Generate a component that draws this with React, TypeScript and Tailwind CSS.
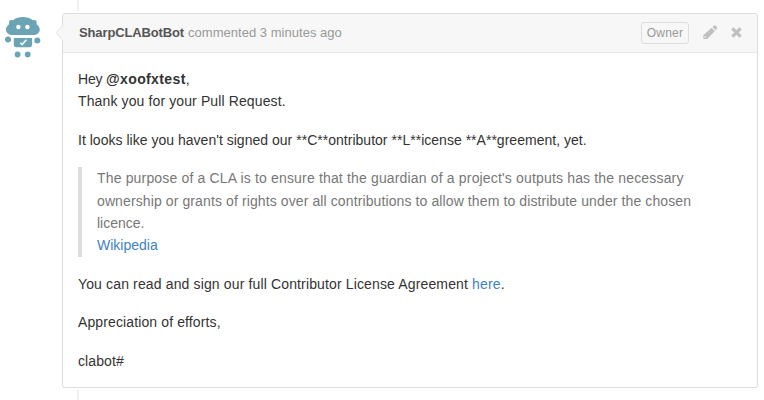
import type { ReactNode } from 'react';

function RobotAvatar() {
  return (
    <svg className="block h-[44px] w-[38px]" viewBox="0 0 38 44" fill="#6ba5b5" role="img" aria-label="SharpCLABotBot">
      <path d="M4.3 4.8Q5.4 3.7 8 4.3C10.5 2.3 14 1.1 17.8 1.1C21.6 1.1 25.3 2.3 27.8 4.3Q30.4 3.7 31.4 4.8Q31.9 6.4 31.6 8.2C33.7 9.7 34.8 11.6 34.8 13.7C34.8 16.2 32.8 18.1 29.8 19.1H6C3 18.1.9 16.2.9 13.7C.9 11.6 2 9.7 4.1 8.2Q3.8 6.4 4.3 4.8Z" />
      <path d="M8.8 21.9H27.1V28.6Q27.1 31.2 24.6 31.2H11.4Q8.8 31.2 8.8 28.6Z" />
      <circle cx="3" cy="23.6" r="3" />
      <circle cx="32.3" cy="24.6" r="3" />
      <circle cx="12.6" cy="38.5" r="2.9" />
      <circle cx="22.7" cy="38.5" r="2.9" />
      <circle cx="13.4" cy="11" r="2.2" fill="#fff" />
      <circle cx="22.4" cy="11" r="2.2" fill="#fff" />
      <path d="M15.3 26.7L17.2 28.6L21.3 23.7" fill="none" stroke="#fff" strokeWidth="1.5" />
    </svg>
  );
}

function PencilIcon() {
  return (
    <svg className="block h-[14px] w-[15px]" viewBox="0 0 15 14" fill="#c0c0c0" aria-label="Edit">
      <path d="M.3 14V10.2L8.6 2.7L11.9 6L4.2 14ZM1.5 11.4V12.8H2.9L3.3 12.3L2 11Z" fillRule="evenodd" />
      <path d="M9.4 2L11.1.6Q11.8 0 12.5.6L14 2.1Q14.6 2.8 14 3.5L12.7 5.2Z" />
    </svg>
  );
}

function CloseIcon() {
  return (
    <svg className="block h-[11px] w-[11px]" viewBox="0 0 11 11" aria-label="Delete">
      <path d="M1.4 1.4L9.6 9.6M9.6 1.4L1.4 9.6" stroke="#c0c0c0" strokeWidth="3.3" />
    </svg>
  );
}

function Paragraph({ children }: { children: ReactNode }) {
  return <p className="whitespace-nowrap">{children}</p>;
}

export default function App() {
  return (
    <div className="flex h-[400px] w-[764px] overflow-hidden bg-white font-['Liberation_Sans',Arial,sans-serif]">
      <div className="w-[62px] shrink-0 pt-4 pl-[5px]">
        <RobotAvatar />
      </div>
      <main className="flex w-[696px] flex-col">
        <div className="ml-[15px] h-[11px] w-0.5 shrink-0 bg-[#f0f0f0]" />
        <article className="relative mt-0.5 h-[375px] shrink-0 rounded-[3px] border border-[#dddddd] bg-white">
          <svg className="absolute top-[11px] -left-[8px] h-4 w-2" viewBox="0 0 8 16">
            <path d="M8 0L.7 7.7L8 15.4Z" fill="#f7f7f7" />
            <path d="M7.6 .8L.9 7.7L7.6 14.6" fill="none" stroke="#e5e5e5" />
          </svg>
          <header className="flex h-[39px] items-center rounded-t-[2px] border-b border-[#e8e8e8] bg-[#f7f7f7] pr-[15px] pl-4 text-[13px] text-[#999999]">
            <div className="flex-1 pb-px whitespace-nowrap">
              <strong className="inline-block w-[105px] font-bold tracking-[-0.13px] text-[#555555]">SharpCLABotBot</strong>
              <span className="ml-1 tracking-[0.03px]">commented 3 minutes ago</span>
            </div>
            <span className="mr-[14px] flex h-[22px] w-12 items-center justify-center rounded-[3px] border border-[#dddddd] text-[12px] tracking-[0.2px]">Owner</span>
            <span className="pb-[2px]"><PencilIcon /></span>
            <span className="ml-[13px] pb-px"><CloseIcon /></span>
          </header>
          <div className="flex flex-col gap-4 px-[15px] pt-[15px] text-[14px] leading-[22.4px] text-[#333333]">
            <Paragraph>
              <span className="tracking-[-0.2px]">Hey </span>
              <strong className="tracking-[0.38px]">@xoofxtest</strong>,<br />
              <span className="tracking-[0.12px]">Thank you for your Pull Request.</span>
            </Paragraph>
            <Paragraph>
              <span className="tracking-[0.02px]">It looks like you haven't signed our **C**ontributor **L**icense **A**greement, yet.</span>
            </Paragraph>
            <blockquote className="border-l-4 border-[#dddddd] pl-[15px] whitespace-nowrap text-[#777777]">
              <span className="tracking-[0.163px]">The purpose of a CLA is to ensure that the guardian of a project's outputs has the necessary</span><br />
              <span className="tracking-[0.108px]">ownership or grants of rights over all contributions to allow them to distribute under the chosen</span><br />
              licence.<br />
              <a className="text-[#4183c4]">Wikipedia</a>
            </blockquote>
            <Paragraph>
              <span className="tracking-[0.14px]">
                You can read and sign our full Contributor License Agreement <a className="text-[#4183c4]">here</a>.
              </span>
            </Paragraph>
            <Paragraph><span className="tracking-[0.12px]">Appreciation of efforts,</span></Paragraph>
            <Paragraph><span className="tracking-[0.1px]">clabot#</span></Paragraph>
          </div>
        </article>
        <div className="mt-0.5 ml-[15px] h-[10px] w-0.5 shrink-0 bg-[#f0f0f0]" />
      </main>
    </div>
  );
}
